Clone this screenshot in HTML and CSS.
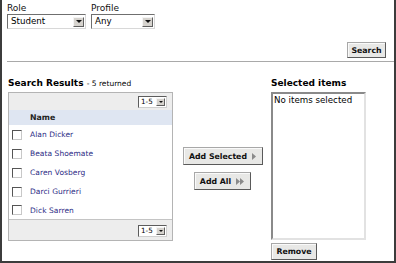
FILE: index.html
```html
<!DOCTYPE html>
<html>
<head>
<meta charset="utf-8">
<link rel="stylesheet" href="styles.css">
</head>
<body>
<div class="frame">
  <div class="filters">
    <div class="field">
      <div class="label">Role</div>
      <div class="select select-role"><span class="select-text">Student</span><span class="select-btn"><span class="tri"></span></span></div>
    </div>
    <div class="field">
      <div class="label">Profile</div>
      <div class="select select-profile"><span class="select-text">Any</span><span class="select-btn"><span class="tri"></span></span></div>
    </div>
  </div>
  <div class="search-row"><button class="btn btn-search">Search</button></div>
  <div class="rule"></div>
  <div class="main">
    <div class="col-left">
      <div class="heading">Search Results <span class="sub">- 5 returned</span></div>
      <div class="results">
        <div class="bar bar-top"><div class="mini-select"><span class="mini-text">1-5</span><span class="mini-btn"><span class="tri tri-small"></span></span></div></div>
        <div class="head-row">Name</div>
        <div class="rows">
          <div class="row"><span class="check"></span><span class="name">Alan Dicker</span></div>
          <div class="row"><span class="check"></span><span class="name">Beata Shoemate</span></div>
          <div class="row"><span class="check"></span><span class="name">Caren Vosberg</span></div>
          <div class="row"><span class="check"></span><span class="name">Darci Gurrieri</span></div>
          <div class="row"><span class="check"></span><span class="name">Dick Sarren</span></div>
        </div>
        <div class="bar bar-bottom"><div class="mini-select"><span class="mini-text">1-5</span><span class="mini-btn"><span class="tri tri-small"></span></span></div></div>
      </div>
    </div>
    <div class="col-mid">
      <button class="btn btn-add-sel">Add Selected <svg class="ico" width="4" height="7" viewBox="0 0 4 7"><path d="M0 0L4 3.5L0 7Z" fill="#8a8a8a"/></svg></button>
      <button class="btn btn-add-all">Add All <svg class="ico" width="8" height="7" viewBox="0 0 8 7"><path d="M0 0L4 3.5L0 7Z M4 0L8 3.5L4 7Z" fill="#8a8a8a"/></svg></button>
    </div>
    <div class="col-right">
      <div class="heading">Selected items</div>
      <div class="listbox">No items selected</div>
      <button class="btn btn-remove">Remove</button>
    </div>
  </div>
</div>
</body>
</html>
```
FILE: styles.css
```css
html, body {
  margin: 0;
  padding: 0;
  background: #ffffff;
}
.frame {
  width: 396px;
  height: 263px;
  box-sizing: border-box;
  border: 2px solid #3c3c3c;
  border-top: none;
  padding: 2px 8px 0 6px;
  font-family: "DejaVu Sans", Verdana, sans-serif;
  color: #000;
  overflow: hidden;
  background: #fff;
}
.filters {
  display: flex;
  gap: 5px;
  margin-left: -1px;
}
.field {
  display: flex;
  flex-direction: column;
}
.label {
  font-size: 9px;
  line-height: 12px;
  height: 12px;
  color: #111;
}
.select {
  display: flex;
  align-items: center;
  justify-content: space-between;
  height: 15px;
  box-sizing: border-box;
  border: 1px solid;
  border-color: #6f6f6f #d8d8d8 #d8d8d8 #6f6f6f;
  background: #fff;
  padding: 0 1px 0 3px;
}
.select-role { width: 79px; }
.select-profile { width: 64px; }
.select-text {
  font-size: 8.7px;
  line-height: 13px;
}
.select-btn {
  width: 11px;
  height: 10px;
  box-sizing: border-box;
  background: #d6d3ce;
  border: 1px solid;
  border-color: #f4f4f4 #606060 #606060 #f4f4f4;
  display: flex;
  align-items: center;
  justify-content: center;
}
.tri {
  width: 0;
  height: 0;
  border-left: 3px solid transparent;
  border-right: 3px solid transparent;
  border-top: 3px solid #111;
}
.tri-small {
  border-left-width: 2px;
  border-right-width: 2px;
  border-top-width: 2px;
}
.search-row {
  display: flex;
  justify-content: flex-end;
  margin-top: 13px;
}
.btn {
  font-family: "DejaVu Sans", Verdana, sans-serif;
  font-weight: bold;
  font-size: 7.8px;
  color: #111;
  background: #e8e8e6;
  border: 1px solid;
  border-color: #a8a8a8 #5a5a5a #5a5a5a #a8a8a8;
  box-shadow: inset 1px 1px 0 #fafafa;
  padding: 0;
  margin: 0;
  display: flex;
  align-items: center;
  justify-content: center;
  box-sizing: border-box;
}
.btn-search {
  width: 39px;
  height: 16px;
}
.rule {
  height: 1px;
  background: #a9a9a9;
  margin: 3px -8px 0 -1px;
}
.main {
  display: flex;
  margin-top: 15px;
}
.col-left {
  width: 165px;
  display: flex;
  flex-direction: column;
}
.heading {
  font-size: 9px;
  font-weight: bold;
  line-height: 12px;
  height: 12px;
  margin-bottom: 3px;
  white-space: nowrap;
}
.sub {
  font-size: 7.5px;
  font-weight: normal;
}
.results {
  border: 1px solid #b4b4b4;
  display: flex;
  flex-direction: column;
}
.bar {
  background: #ededed;
  display: flex;
  justify-content: flex-end;
  padding-right: 5px;
}
.bar-top {
  height: 17px;
  padding-top: 3px;
  box-sizing: border-box;
}
.bar-bottom {
  height: 21px;
  box-sizing: border-box;
  padding-top: 5px;
  border-top: 1px solid #c4c4c4;
}
.mini-select {
  width: 29px;
  height: 12px;
  box-sizing: border-box;
  border: 1px solid;
  border-color: #5c5c5c #cfcfcf #cfcfcf #5c5c5c;
  background: #fff;
  display: flex;
  align-items: center;
  justify-content: space-between;
  padding: 0 1px 0 2px;
}
.mini-text {
  font-size: 7.2px;
  line-height: 10px;
}
.mini-btn {
  width: 9px;
  height: 8px;
  box-sizing: border-box;
  background: #d6d3ce;
  border: 1px solid;
  border-color: #f4f4f4 #606060 #606060 #f4f4f4;
  display: flex;
  align-items: center;
  justify-content: center;
}
.head-row {
  background: #dfe6f2;
  height: 15px;
  line-height: 15px;
  font-size: 7.8px;
  font-weight: bold;
  color: #222;
  padding-left: 21px;
}
.rows {
  display: flex;
  flex-direction: column;
}
.row {
  height: 19px;
  display: flex;
  align-items: center;
  padding-left: 3px;
}
.row:last-child {
  height: 18px;
}
.check {
  width: 10px;
  height: 10px;
  box-sizing: border-box;
  border: 1px solid;
  border-color: #555 #c8c8c8 #c8c8c8 #555;
  background: #fff;
  margin-right: 8px;
  flex: none;
}
.name {
  font-size: 7.5px;
  color: #2a2a84;
  letter-spacing: 0.05px;
}
.col-mid {
  width: 98px;
  display: flex;
  flex-direction: column;
  align-items: center;
  padding-top: 70px;
  gap: 7px;
}
.btn-add-sel {
  width: 80px;
  height: 18px;
  margin-left: 1px;
}
.btn-add-all {
  width: 57px;
  height: 18px;
}
.ico {
  margin-left: 5px;
  display: block;
}
.col-right {
  display: flex;
  flex-direction: column;
  align-items: flex-start;
}
.listbox {
  width: 95px;
  height: 148px;
  box-sizing: border-box;
  border: 2px solid;
  border-color: #8a8a8a #e2e2e2 #e2e2e2 #8a8a8a;
  font-size: 8.7px;
  line-height: 11px;
  padding: 1px 1px;
  white-space: nowrap;
}
.btn-remove {
  width: 46px;
  height: 17px;
  margin-top: 3px;
}
```
